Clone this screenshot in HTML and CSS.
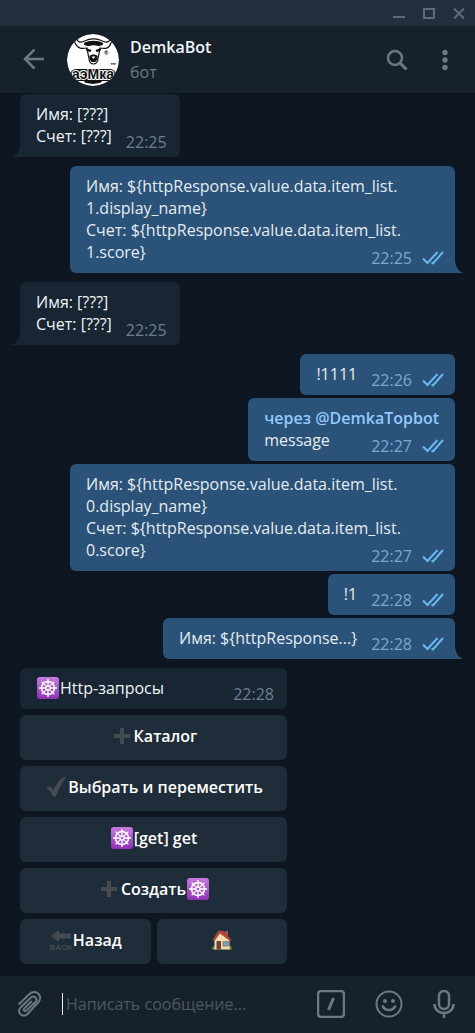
FILE: index.html
```html
<!DOCTYPE html>
<html lang="ru">
<head>
    <meta charset="utf-8">
    <meta name="viewport" content="width=device-width, initial-scale=1">
    <title>DemkaBot</title>
    <link rel="stylesheet" href="styles.css">
</head>
<body>
    <!-- shared icons -->
    <svg class="sprite" width="0" height="0" aria-hidden="true">
        <defs>
            <linearGradient id="violet" x1="0" y1="0" x2="0" y2="1">
                <stop offset="0" stop-color="#c77bdc"/>
                <stop offset="1" stop-color="#9030b5"/>
            </linearGradient>
            <symbol id="checks" viewBox="0 0 22 14">
                <path d="M1 7.500l4.500 4.500L15.500 1M9.500 11.500L11 12.500L21 1" fill="none" stroke="#6ab8f2" stroke-width="2"/>
            </symbol>
            <symbol id="wheel" viewBox="0 0 22 22">
                <rect width="22" height="22" rx="3" fill="url(#violet)"/>
                <g fill="none" stroke="#fff" stroke-width="1.300">
                    <circle cx="11" cy="11" r="6.500" stroke-width="1.500"/>
                    <circle cx="11" cy="11" r="2"/>
                    <path d="M11 2v7M11 13v7M2 11h7M13 11h7M4.600 4.600l5 5M12.400 12.400l5 5M17.400 4.600l-5 5M9.600 12.400l-5 5"/>
                </g>
            </symbol>
            <symbol id="plus" viewBox="0 0 22 22">
                <path d="M9 3h4v6h6v4h-6v6H9v-6H3V9h6z" fill="#464b4f"/>
            </symbol>
            <symbol id="tick" viewBox="0 0 22 22">
                <path d="M1.500 12.500c1-2.500 3.500-2 4.700-.8L8.500 14C11 9 14 3.500 18 1.500c1.500-.7 2.500-.7 3 0C17 7 14 12.500 11.500 19c-.7 2-3.500 2-4.300 0C6 16 4.500 14 1.500 12.500z" fill="#464b4f"/>
            </symbol>
            <symbol id="back" viewBox="0 0 22 22">
                <path d="M1 7l8-6v3.500h12v5H9V13z" fill="#464b4f"/>
                <text x="11" y="21" text-anchor="middle" class="back-label">BACK</text>
            </symbol>
            <symbol id="house" viewBox="0 0 22 22">
                <ellipse cx="3.500" cy="19" rx="2.500" ry="2" fill="#5d8a3a"/>
                <ellipse cx="18.500" cy="19" rx="2.500" ry="2" fill="#5d8a3a"/>
                <path d="M14 2h3v5h-3z" fill="#a5553f"/>
                <path d="M3.500 10L8.500 3l10 8v9.500h-15z" fill="#f2dcb4"/>
                <path d="M1.500 11L7.500 1.500 12.500 2l8 9-1.500 1L9 4.500 3.500 12z" fill="#b04438"/>
                <path d="M5.500 12h4.500v8.500H5.500z" fill="#6e4230"/>
                <path d="M12 12.500h5.500v4.500H12z" fill="#69a6cf" stroke="#a87956"/>
            </symbol>
        </defs>
    </svg>

    <div class="app">
        <div class="titlebar">
            <button class="win-btn" aria-label="Свернуть"><svg width="14" height="14" viewBox="0 0 14 14"><path d="M1 11h12" stroke-width="2"/></svg></button>
            <button class="win-btn" aria-label="Развернуть"><svg width="14" height="14" viewBox="0 0 14 14"><path d="M2 3h10v9H2z" stroke-width="2"/></svg></button>
            <button class="win-btn" aria-label="Закрыть"><svg width="14" height="14" viewBox="0 0 14 14"><path d="M2 2.500l10 10M12 2.500l-10 10" stroke-width="2"/></svg></button>
        </div>

        <header class="header">
            <button class="icon-btn" aria-label="Назад"><svg width="22" height="22" viewBox="0 0 22 22"><path d="M21 10H2M11.500 .5L2 10l9.500 9.500"/></svg></button>
            <svg class="avatar" width="52" height="52" viewBox="0 0 52 52" role="img" aria-label="DemkaBot">
                <circle cx="26" cy="26" r="26" fill="#fff"/>
                <!-- bull head -->
                <path d="M8 9c3 6 7 6 12 5 1 5 1 7 2 10 0 8 9 8 9 0 1-3 1-5 2-10 5 1 9 1 11-5" fill="none" stroke="#111" stroke-width="1.200"/>
                <path d="M10 5c1 5 6 3 10 1 4-1.500 9-1.500 13 0 4 2 9 4 10-1" fill="none" stroke="#111" stroke-width="1.200"/>
                <path d="M10 5C8 6 7 7 8 9M43 5c2 1 2 2 1 4" fill="none" stroke="#111" stroke-width="1.200"/>
                <path d="M17 9c5-3 14-3 19 0 1 2-2 3-5 3-3-1-6-1-9 0-3 0-6-1-5-3z" fill="#111"/>
                <path d="M19 14l5.500 2-1 2-4-1zM34 14l-5.500 2 1 2 4-1z" fill="#111"/>
                <path d="M22.500 22c2-2 6-2 8 0v2.500c-1 3-2 3.500-4 3.500s-3-.5-4-3.500z" fill="#111"/>
                <path d="M24.500 22.500h4l-2 2.500z" fill="#fff"/>
                <text x="37" y="21" class="logo-mark">®</text>
                <text x="43" y="33" class="logo-mark">™</text>
                <!-- black cloud behind the word -->
                <path d="M9 41h34" stroke="#111" stroke-width="12" stroke-linecap="round"/>
                <path d="M20 46l6 1 6-1" fill="none" stroke="#111" stroke-width="6" stroke-linecap="round"/>
                <text x="26" y="45" text-anchor="middle" class="logo-text">аэМка</text>
            </svg>
            <div class="peer">
                <div class="peer-name">DemkaBot</div>
                <div class="peer-status">бот</div>
            </div>
            <button class="icon-btn" aria-label="Поиск"><svg width="22" height="22" viewBox="0 0 22 22"><circle cx="9" cy="9" r="7"/><path d="M14 14l6.500 6.500" stroke-width="3"/></svg></button>
            <button class="icon-btn menu-btn" aria-label="Меню"><svg width="6" height="22" viewBox="0 0 6 22"><g class="solid"><circle cx="3" cy="3.500" r="2.700"/><circle cx="3" cy="11" r="2.700"/><circle cx="3" cy="18.500" r="2.700"/></g></svg></button>
        </header>

        <main class="chat">
            <div class="msg in tail">Имя: [???]<br>Счет: [???]<span class="meta">22:25</span></div>

            <div class="msg out tail group">Имя: ${httpResponse.value.data.item_list.<wbr>1.display_name}<br>Счет: ${httpResponse.value.data.item_list.<wbr>1.score}<span class="meta">22:25<svg class="checks"><use href="#checks"/></svg></span></div>

            <div class="msg in tail group">Имя: [???]<br>Счет: [???]<span class="meta">22:25</span></div>

            <div class="msg out group">!1111<span class="meta">22:26<svg class="checks"><use href="#checks"/></svg></span></div>
            <div class="msg out"><a class="via" href="#">через @DemkaTopbot</a>message<span class="meta">22:27<svg class="checks"><use href="#checks"/></svg></span></div>
            <div class="msg out">Имя: ${httpResponse.value.data.item_list.<wbr>0.display_name}<br>Счет: ${httpResponse.value.data.item_list.<wbr>0.score}<span class="meta">22:27<svg class="checks"><use href="#checks"/></svg></span></div>
            <div class="msg out">!1<span class="meta">22:28<svg class="checks"><use href="#checks"/></svg></span></div>
            <div class="msg out tail">Имя: ${httpResponse...}<span class="meta">22:28<svg class="checks"><use href="#checks"/></svg></span></div>

            <div class="bot group">
                <div class="msg in"><svg class="emoji"><use href="#wheel"/></svg>Http-запросы<span class="meta">22:28</span></div>
                <div class="keyboard">
                    <button class="key wide"><svg class="emoji"><use href="#plus"/></svg>Каталог</button>
                    <button class="key wide"><svg class="emoji"><use href="#tick"/></svg>Выбрать и переместить</button>
                    <button class="key wide"><svg class="emoji"><use href="#wheel"/></svg>[get] get</button>
                    <button class="key wide"><svg class="emoji"><use href="#plus"/></svg>Создать<svg class="emoji"><use href="#wheel"/></svg></button>
                    <button class="key"><svg class="emoji"><use href="#back"/></svg>Назад</button>
                    <button class="key" aria-label="Домой"><svg class="emoji"><use href="#house"/></svg></button>
                </div>
            </div>
        </main>

        <footer class="composer">
            <button class="icon-btn" aria-label="Прикрепить"><svg width="28" height="28" viewBox="0 0 28 28"><path d="M2.500 14.500L13.500 4c6.500-5.500 14 2 9 8L11.500 24c-5 4.500-11-1.500-7-6.500L15 7.500c3.500-2.500 7 1.200 4.500 4.500L10.500 20.500c-2 1.500-3.500-.5-2.200-2.200L16 11" stroke-width="2"/></svg></button>
            <input class="message-input" type="text" placeholder="Написать сообщение..." aria-label="Сообщение">
            <button class="icon-btn" aria-label="Команды"><svg width="28" height="28" viewBox="0 0 28 28"><rect x="1" y="1" width="26" height="26" rx="3"/><path d="M16.500 8l-5 12" stroke-width="3"/></svg></button>
            <button class="icon-btn" aria-label="Эмодзи"><svg width="28" height="28" viewBox="0 0 28 28"><circle cx="14" cy="14" r="12.500" stroke-width="2"/><path d="M7.500 15.500c2 6 11 6 13 0"/><g class="solid"><circle cx="10" cy="11" r="2"/><circle cx="18" cy="11" r="2"/></g></svg></button>
            <button class="icon-btn" aria-label="Голосовое сообщение"><svg width="22" height="28" viewBox="0 0 22 28"><rect x="6" y="1" width="10" height="18" rx="5"/><path d="M1.500 14c0 12 19 12 19 0M11 23v5"/></svg></button>
        </footer>
    </div>
</body>
</html>
```
FILE: styles.css
```css
* {
    box-sizing: border-box;
}

body {
    margin: 0;
    background-color: #0e1621;
    color: #f0f4f7;
    font: 16px/22px "Open Sans", "Noto Sans", sans-serif;
}

button {
    padding: 0;
    border: 0;
    background: none;
    color: inherit;
    font: inherit;
    cursor: pointer;
}

.sprite {
    position: absolute;
}

.app {
    display: flex;
    flex-direction: column;
    min-height: 100vh;
}

/* window controls */

.titlebar {
    display: flex;
    justify-content: flex-end;
    align-items: center;
    gap: 16px;
    height: 26px;
    padding-right: 9px;
    background-color: #242f3d;
}

.win-btn {
    display: flex;
}

.win-btn svg {
    fill: none;
    stroke: #5f6b78;
}

/* header */

.header {
    display: flex;
    align-items: center;
    height: 67px;
    padding: 0 27px 0 23px;
    background-color: #17212b;
    box-shadow: 0 1px 0 #0a121b;
}

.icon-btn {
    display: flex;
    flex: none;
}

.icon-btn svg {
    fill: none;
    stroke: #6c7883;
    stroke-width: 2.5;
}

.icon-btn .solid {
    fill: #6c7883;
    stroke: none;
}

.avatar {
    flex: none;
    margin: 0 11px 0 22px;
    border-radius: 50%;
}

.logo-mark {
    font: bold 6px "Liberation Sans", sans-serif;
}

.logo-text {
    fill: #111;
    stroke: #fff;
    stroke-width: 2;
    stroke-linejoin: round;
    paint-order: stroke;
    font: bold 14px "Liberation Sans", sans-serif;
}

.peer {
    flex: 1;
}

.peer-name {
    font-weight: 600;
}

.peer-status {
    margin-top: 3px;
    color: #6c7883;
}

.menu-btn {
    margin-left: 34px;
}

/* messages */

.chat {
    display: flex;
    flex: 1;
    flex-direction: column;
    align-items: flex-start;
    justify-content: flex-end;
    gap: 3px;
    padding: 1px 20px 12px;
}

.msg {
    display: flow-root;
    position: relative;
    max-width: calc(100% - 50px);
    padding: 9px 16px 10px;
    border-radius: 6px;
}

.group {
    margin-top: 6px;
}

.in {
    background-color: #182533;
}

.out {
    align-self: flex-end;
    background-color: #2b5278;
    color: #e4ecf2;
}

.in.tail {
    border-bottom-left-radius: 0;
}

.out.tail {
    border-bottom-right-radius: 0;
}

.tail::after {
    content: "";
    position: absolute;
    bottom: 0;
    width: 8px;
    height: 12px;
    background-color: inherit;
}

.in.tail::after {
    right: 100%;
    clip-path: path("M8 0Q7 9 0 12H8z");
}

.out.tail::after {
    left: 100%;
    clip-path: path("M0 0Q1 9 8 12H0z");
}

.meta {
    display: flex;
    float: right;
    align-items: center;
    gap: 10px;
    margin: 6px -3px -6px 14px;
    color: #6d7f8f;
}

.out .meta {
    margin-right: -5px;
    color: #7da8d3;
}

.checks {
    width: 22px;
    height: 14px;
}

.via {
    display: block;
    color: #90caff;
    font-weight: 600;
    text-decoration: none;
}

.emoji {
    width: 22px;
    height: 22px;
    margin: 0 1px;
    vertical-align: top;
}

.back-label {
    fill: #464b4f;
    font: bold 8px "Liberation Sans", sans-serif;
}

/* bot keyboard */

.bot {
    width: 267px;
    max-width: 100%;
}

.bot .msg {
    max-width: none;
}

.keyboard {
    display: grid;
    grid-template-columns: 1fr 1fr;
    gap: 6px;
    margin-top: 6px;
}

.key {
    height: 45px;
    padding-bottom: 4px;
    border-radius: 6px;
    background-color: #1f2c39;
    color: #fff;
    font-weight: 600;
}

.wide {
    grid-column: span 2;
}

/* message box */

.composer {
    display: flex;
    align-items: center;
    gap: 30px;
    height: 57px;
    padding: 0 20px 2px 16px;
    background-color: #17212b;
}

.message-input {
    flex: 1;
    min-width: 0;
    height: 22px;
    margin-left: -12px;
    padding: 0 0 0 3px;
    border: 0;
    border-left: 1px solid #f0f4f7;
    outline: 0;
    background: none;
    color: #f0f4f7;
    font: inherit;
}

.message-input::placeholder {
    color: #4c5863;
    opacity: 1;
}
```
